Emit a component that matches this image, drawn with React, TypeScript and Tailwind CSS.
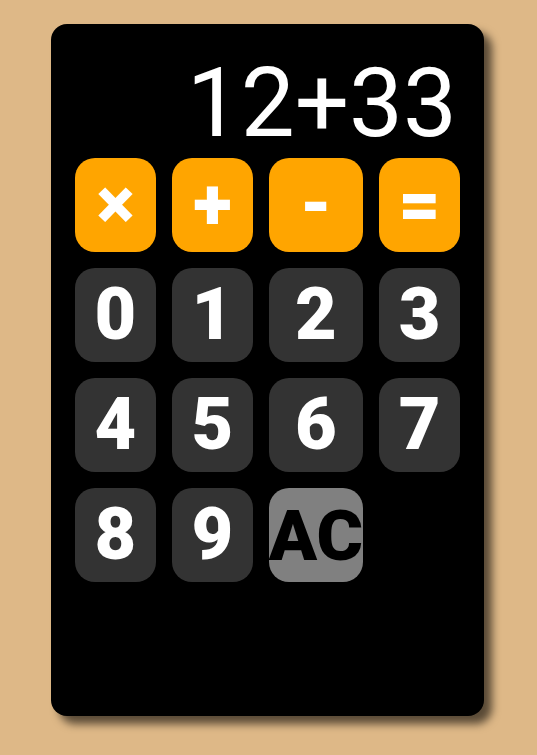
import React from "react";

const ops = ["×", "+", "-", "="];
const digits = ["0", "1", "2", "3", "4", "5", "6", "7", "8", "9"];

export default function App() {
  return (
    <div className="min-h-screen bg-[#deb887] pt-6 font-['Roboto',sans-serif]">
      <div className="ml-[51px] flex h-[692px] w-[433px] flex-col rounded-2xl bg-black px-6 pt-6 shadow-[8px_8px_8px_rgba(0,0,0,0.6)]">
        <div className="h-[110px] pr-[3px] text-right text-[96px] leading-[110px] text-white">
          12+33
        </div>
        <div className="grid grid-cols-[repeat(4,1fr)] gap-4">
          {ops.map((op) => (
            <button
              key={op}
              className="flex h-[94px] items-center justify-center rounded-[20px] bg-[#ffa500] text-[72px] font-black leading-none text-white"
            >
              {op}
            </button>
          ))}
          {digits.map((d) => (
            <button
              key={d}
              className="flex h-[94px] items-center justify-center rounded-[20px] bg-[#333333] text-[72px] font-black leading-none text-white"
            >
              {d}
            </button>
          ))}
          <button className="flex h-[94px] items-center justify-center rounded-[20px] bg-[#808080] text-[71px] font-black leading-none text-black">
            AC
          </button>
        </div>
      </div>
    </div>
  );
}
